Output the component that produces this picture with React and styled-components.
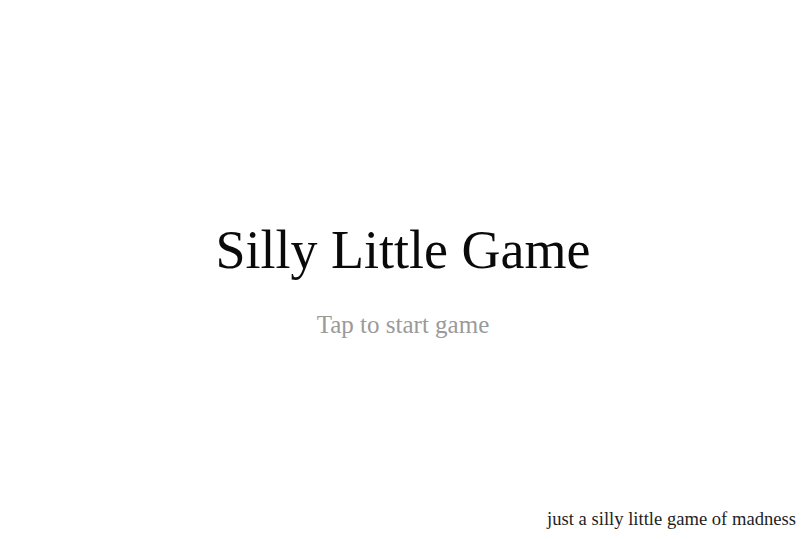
import styled, { createGlobalStyle } from "styled-components";

const GlobalStyle = createGlobalStyle`
  html, body {
    margin: 0;
    padding: 0;
    height: 100%;
    background: #ffffff;
  }
  #root {
    height: 100%;
  }
`;

const Page = styled.div`
  display: flex;
  flex-direction: column;
  height: 100vh;
  font-family: "Liberation Serif", "Times New Roman", serif;
  color: #111111;
  cursor: pointer;
`;

const Stage = styled.main`
  flex: 1;
  display: flex;
  flex-direction: column;
  align-items: center;
  justify-content: center;
  padding-top: 50px;
`;

const Title = styled.h1`
  margin: 0;
  font-size: 54px;
  font-weight: 400;
  line-height: 1.2;
  color: #0a0a0a;
`;

const Hint = styled.p`
  margin: 27px 0 0;
  font-size: 25px;
  line-height: 1.2;
  color: #9a9a9a;
`;

const Footer = styled.footer`
  display: flex;
  justify-content: flex-end;
  padding: 0 10px 9px;
  font-size: 18.6px;
  line-height: 1.2;
  color: #1e1e1e;
`;

export default function App() {
  return (
    <Page>
      <GlobalStyle />
      <Stage>
        <Title>Silly Little Game</Title>
        <Hint>Tap to start game</Hint>
      </Stage>
      <Footer>just a silly little game of madness</Footer>
    </Page>
  );
}
